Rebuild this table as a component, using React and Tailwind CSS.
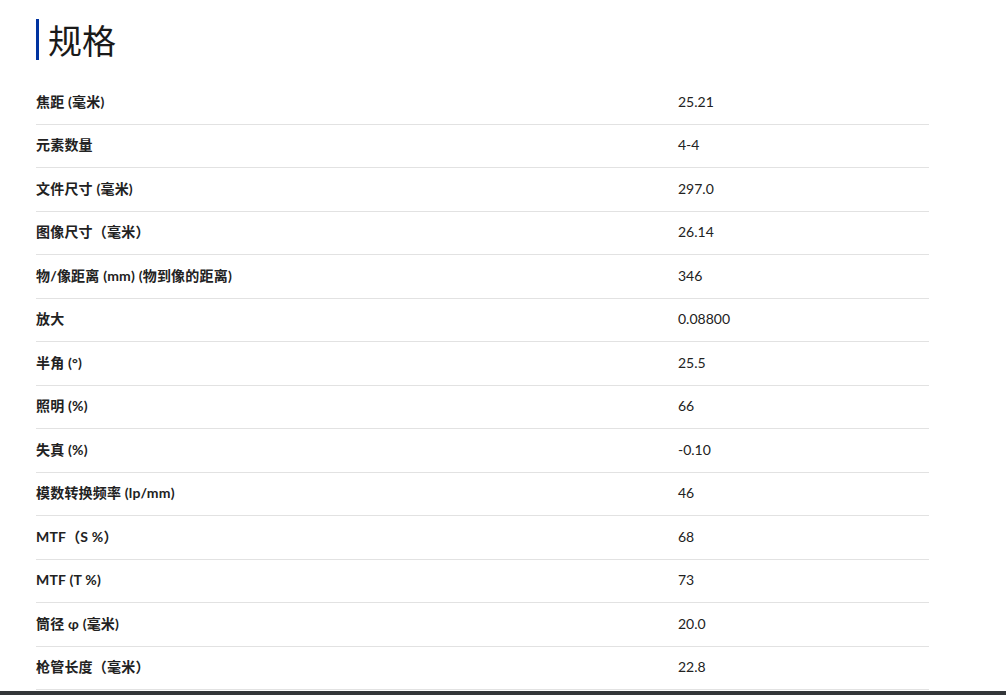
import React from 'react';

const specs = [
  ['焦距 (毫米)', '25.21'],
  ['元素数量', '4-4'],
  ['文件尺寸 (毫米)', '297.0'],
  ['图像尺寸（毫米）', '26.14'],
  ['物/像距离 (mm) (物到像的距离)', '346'],
  ['放大', '0.08800'],
  ['半角 (°)', '25.5'],
  ['照明 (%)', '66'],
  ['失真 (%)', '-0.10'],
  ['模数转换频率 (lp/mm)', '46'],
  ['MTF（S %）', '68'],
  ['MTF (T %)', '73'],
  ['筒径 φ (毫米)', '20.0'],
  ['枪管长度（毫米）', '22.8'],
];

const App = () => {
  return (
    <div className="min-h-screen bg-white font-['Lato','Noto_Sans_CJK_SC',sans-serif] text-[#222]">
      <div className="pl-[36px] w-[929px]">
        <h2 className="mt-[19px] flex items-center border-l-[3px] border-[#0033a0] pl-[9px] h-[41px] text-[34px] leading-none font-['Noto_Sans_CJK_SC',sans-serif] font-normal text-[#1a1a1a]">
          规格
        </h2>
        <div className="mt-[21px]">
          {specs.map(([label, value]) => (
            <div key={label} className="flex items-center h-[43.5px] pb-[2px] border-b border-[#e2e2e2] text-[14px]">
              <div className="w-[642px] font-bold tracking-[0.2px]">{label}</div>
              <div className="flex-1">{value}</div>
            </div>
          ))}
        </div>
      </div>
      <div className="h-[20px] bg-[#333639] mt-[1px]" />
    </div>
  );
};

export default App;
